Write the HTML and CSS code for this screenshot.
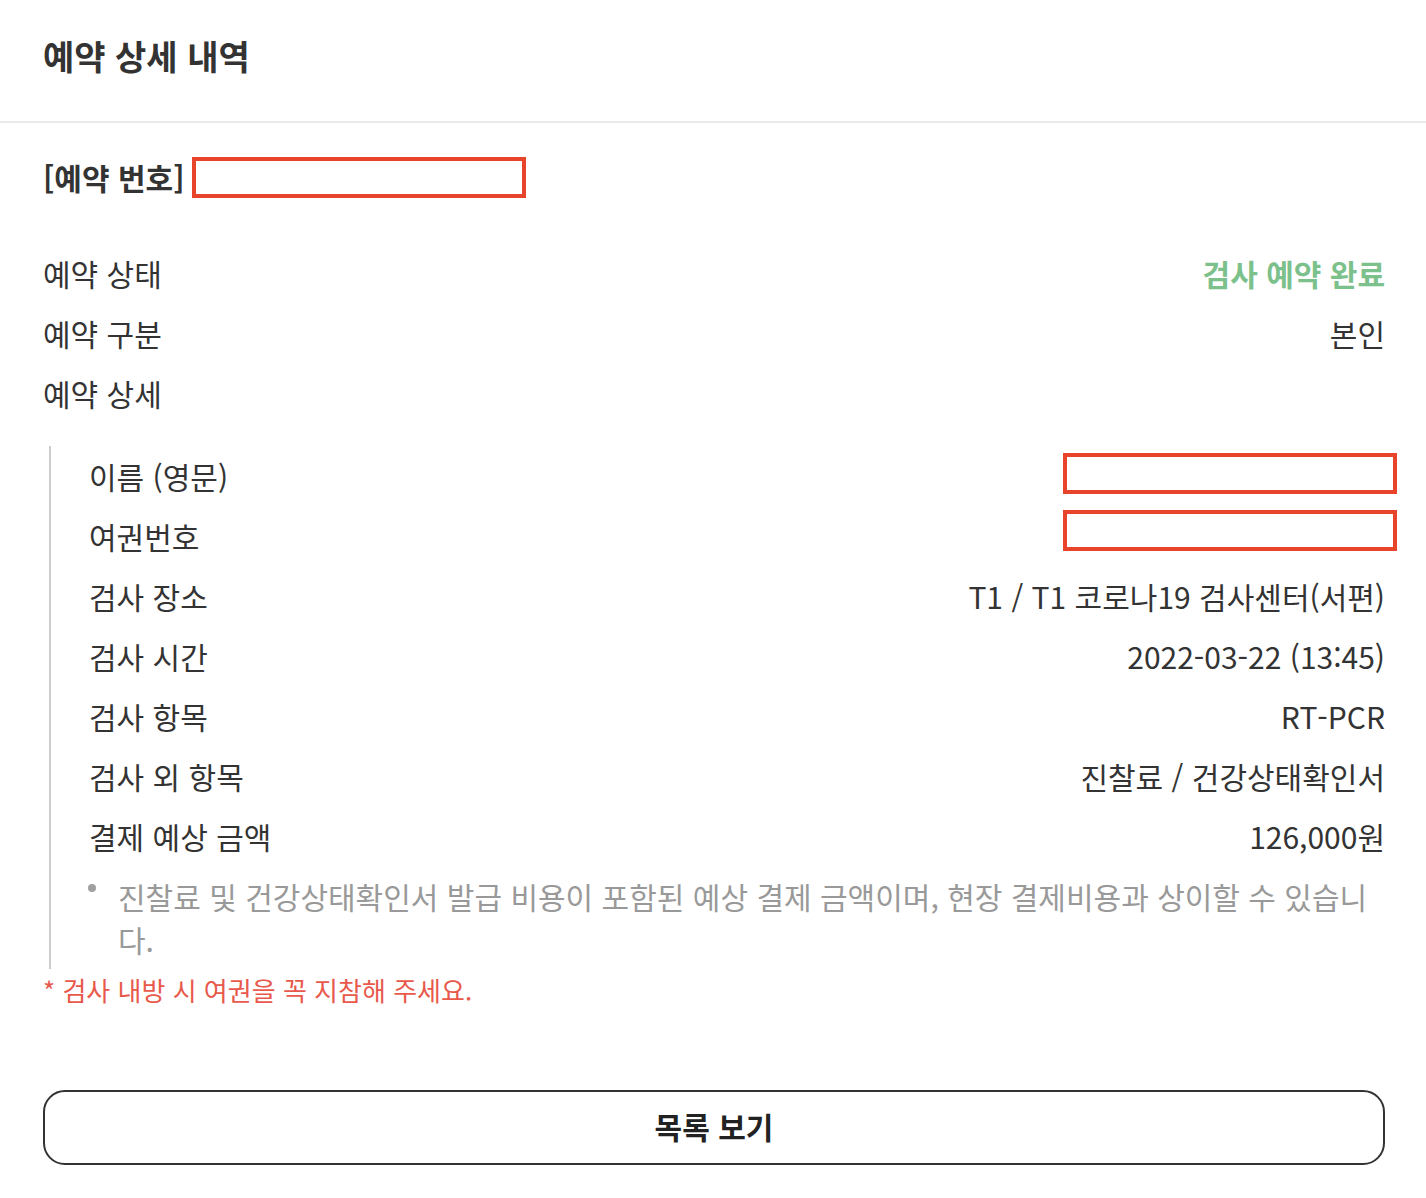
FILE: index.html
```html
<!DOCTYPE html>
<html lang="ko">
<head>
<meta charset="utf-8">
<title>예약 상세 내역</title>
<link rel="stylesheet" href="styles.css">
</head>
<body>
<div class="page">
  <header class="header">
    <h1 class="title">예약 상세 내역</h1>
  </header>
  <main class="content">
    <div class="booking-no">
      <span class="booking-label">[예약 번호]</span>
      <span class="redact redact-number"></span>
    </div>
    <div class="row">
      <span class="label">예약 상태</span>
      <span class="value status">검사 예약 완료</span>
    </div>
    <div class="row">
      <span class="label">예약 구분</span>
      <span class="value">본인</span>
    </div>
    <div class="row">
      <span class="label">예약 상세</span>
    </div>
    <section class="detail">
      <div class="row">
        <span class="label">이름 (영문)</span>
        <span class="value"><span class="redact redact-field"></span></span>
      </div>
      <div class="row">
        <span class="label">여권번호</span>
        <span class="value"><span class="redact redact-field redact-low"></span></span>
      </div>
      <div class="row">
        <span class="label">검사 장소</span>
        <span class="value">T1 / T1 코로나19 검사센터(서편)</span>
      </div>
      <div class="row">
        <span class="label">검사 시간</span>
        <span class="value">2022-03-22 (13:45)</span>
      </div>
      <div class="row">
        <span class="label">검사 항목</span>
        <span class="value">RT-PCR</span>
      </div>
      <div class="row">
        <span class="label">검사 외 항목</span>
        <span class="value">진찰료 / 건강상태확인서</span>
      </div>
      <div class="row">
        <span class="label">결제 예상 금액</span>
        <span class="value">126,000원</span>
      </div>
      <div class="note">
        <span class="bullet"></span>
        <p class="note-text">진찰료 및 건강상태확인서 발급 비용이 포함된 예상 결제 금액이며, 현장 결제비용과 상이할 수 있습니다.</p>
      </div>
    </section>
    <p class="warning">* 검사 내방 시 여권을 꼭 지참해 주세요.</p>
    <button class="list-btn" type="button">목록 보기</button>
  </main>
</div>
</body>
</html>
```
FILE: styles.css
```css
* {
  box-sizing: border-box;
}
html, body {
  margin: 0;
  padding: 0;
  background: #fff;
}
body {
  font-family: "Noto Sans CJK KR", "Noto Sans", sans-serif;
  color: #333;
}
.page {
  width: 1426px;
}
.header {
  height: 123px;
  border-bottom: 2px solid #ebebeb;
  display: flex;
  align-items: center;
  padding: 0 43px 10px;
}
.title {
  margin: 0;
  font-size: 34px;
  font-weight: 700;
  color: #333;
  line-height: 40px;
}
.content {
  padding: 33px 41px 0 43px;
}
.booking-no {
  display: flex;
  align-items: center;
  height: 42px;
  margin-bottom: 45px;
}
.booking-label {
  font-size: 30px;
  font-weight: 700;
  line-height: 40px;
  margin-top: -1px;
}
.redact {
  display: inline-block;
  border: 4px solid #e8432b;
  background: #fff;
}
.redact-number {
  width: 334px;
  height: 41px;
  margin-left: 8px;
}
.row {
  display: flex;
  justify-content: space-between;
  align-items: center;
  height: 60px;
  font-size: 30px;
  line-height: 40px;
}
.label {
  color: #333;
}
.value {
  color: #333;
  display: flex;
  align-items: center;
}
.status {
  color: #7cc08c;
  font-weight: 700;
}
.detail {
  margin: 23px 0 0 6px;
  border-left: 2px solid #cccccc;
  padding: 0 0 8px 38px;
}
.redact-field {
  width: 334px;
  height: 41px;
  margin-right: -12px;
  margin-bottom: 6px;
}
.redact-low {
  margin-bottom: 12px;
}
.note {
  display: flex;
  align-items: flex-start;
  margin-top: 9px;
}
.bullet {
  flex: none;
  width: 8px;
  height: 8px;
  border-radius: 50%;
  background: #a0a0a0;
  margin: 9px 22px 0 -1px;
}
.note-text {
  margin: 0;
  font-size: 30px;
  line-height: 43px;
  color: #999;
}
.warning {
  margin: 3px 0 0;
  font-size: 26px;
  line-height: 36px;
  color: #e8594c;
}
.list-btn {
  display: block;
  width: 100%;
  height: 75px;
  margin-top: 82px;
  padding: 0 0 3px;
  border: 2px solid #333;
  border-radius: 22px;
  background: #fff;
  font-family: "Noto Sans CJK KR", "Noto Sans", sans-serif;
  font-size: 30px;
  font-weight: 700;
  color: #222;
  cursor: pointer;
}
```
